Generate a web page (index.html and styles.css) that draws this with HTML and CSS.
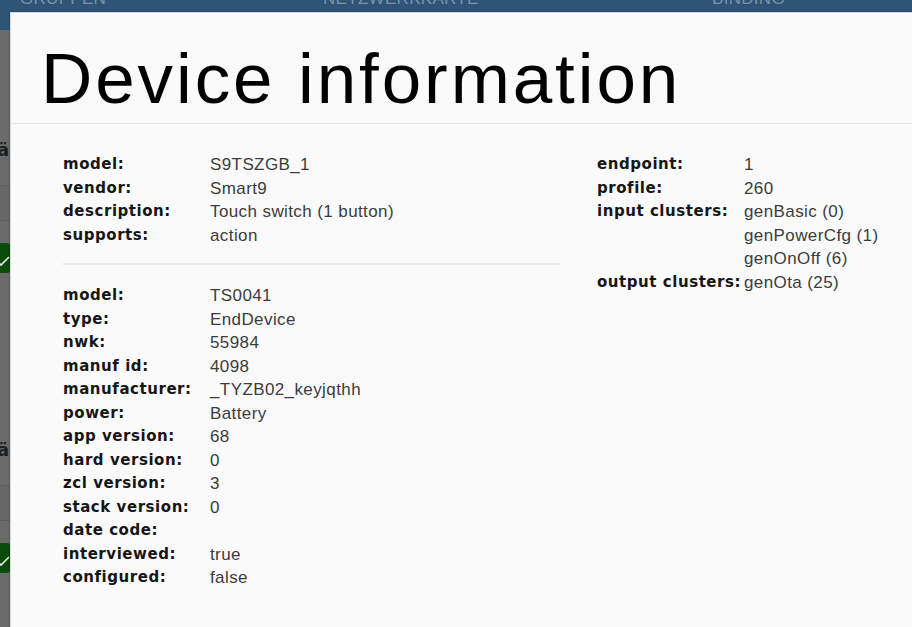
FILE: index.html
```html
<!DOCTYPE html>
<html lang="en">
<head>
<meta charset="utf-8">
<title>Device information</title>
<link rel="stylesheet" href="styles.css">
</head>
<body>
<div class="page">
  <header class="topbar">
    <nav class="nav">
      <span class="nav-item nav-first">Gruppen</span>
      <span class="nav-item nav-second">Netzwerkkarte</span>
      <span class="nav-item">Binding</span>
    </nav>
  </header>
  <main class="list">
    <div class="group group-first">
      <div class="g-text">ä</div>
      <div class="g-mid"></div>
      <div class="g-check"><svg viewBox="0 0 10 30" width="10" height="30"><path d="M-2 19 L1 22 L9 14" fill="none" stroke="#e8f0e8" stroke-width="1.6"/></svg></div>
    </div>
    <div class="group group-next">
      <div class="g-text">ä</div>
      <div class="g-mid"></div>
      <div class="g-check"><svg viewBox="0 0 10 30" width="10" height="30"><path d="M-2 19 L1 22 L9 14" fill="none" stroke="#e8f0e8" stroke-width="1.6"/></svg></div>
    </div>
  </main>
</div>

<div class="modal">
  <div class="modal-header">
    <h1 class="modal-title">Device information</h1>
  </div>
  <div class="modal-body">
    <section class="col-left">
      <dl class="info">
        <dt>model:</dt><dd>S9TSZGB_1</dd>
        <dt>vendor:</dt><dd>Smart9</dd>
        <dt>description:</dt><dd>Touch switch (1 button)</dd>
        <dt>supports:</dt><dd>action</dd>
      </dl>
      <div class="divider"></div>
      <dl class="info">
        <dt>model:</dt><dd>TS0041</dd>
        <dt>type:</dt><dd>EndDevice</dd>
        <dt>nwk:</dt><dd>55984</dd>
        <dt>manuf id:</dt><dd>4098</dd>
        <dt>manufacturer:</dt><dd>_TYZB02_keyjqthh</dd>
        <dt>power:</dt><dd>Battery</dd>
        <dt>app version:</dt><dd>68</dd>
        <dt>hard version:</dt><dd>0</dd>
        <dt>zcl version:</dt><dd>3</dd>
        <dt>stack version:</dt><dd>0</dd>
        <dt>date code:</dt><dd></dd>
        <dt>interviewed:</dt><dd>true</dd>
        <dt>configured:</dt><dd>false</dd>
      </dl>
    </section>
    <section class="col-right">
      <dl class="info">
        <dt>endpoint:</dt><dd>1</dd>
        <dt>profile:</dt><dd>260</dd>
        <dt>input clusters:</dt><dd>genBasic (0)<br>genPowerCfg (1)<br>genOnOff (6)</dd>
        <dt>output clusters:</dt><dd>genOta (25)</dd>
      </dl>
    </section>
  </div>
</div>
</body>
</html>
```

FILE: styles.css
```css
html, body {
  margin: 0;
  padding: 0;
  height: 100%;
  overflow: hidden;
}

body {
  background: #6b6b6b;
  font-family: "Liberation Sans", Arial, sans-serif;
}

.page {
  height: 100%;
}

.topbar {
  height: 30px;
  background: #2e5577;
  overflow: hidden;
}

.nav {
  display: flex;
  margin-top: -11px;
  padding-left: 20px;
  line-height: 20px;
  font-size: 17px;
  letter-spacing: 0.3px;
  text-transform: uppercase;
  color: #7b92aa;
}

.nav-first {
  width: 303px;
}

.nav-second {
  width: 389px;
}

.list {
  display: flex;
  flex-direction: column;
}

.group-first {
  margin-top: 105px;
}

.group-next {
  margin-top: 162px;
}

.g-text {
  height: 45px;
  margin-left: -3px;
  font-family: "DejaVu Sans", sans-serif;
  font-weight: bold;
  font-size: 18px;
  line-height: 30px;
  color: #1e1e1e;
}

.g-mid {
  margin-top: 5px;
  height: 34px;
  border-top: 1px solid #5d5d5d;
  border-bottom: 1px solid #5d5d5d;
  background: #676767;
}

.g-check {
  margin-top: 22px;
  width: 10px;
  height: 30px;
  background: #0b4a0d;
  border-radius: 0 3px 3px 0;
}

.g-check svg {
  display: block;
}

.modal {
  position: absolute;
  left: 10px;
  top: 12px;
  right: -10px;
  bottom: -10px;
  background: #fafafa;
  border: 1px solid #d4dbe1;
  box-shadow: 0 0 3px rgba(0, 0, 0, 0.25);
}

.modal-header {
  padding: 26px 0 4px 30px;
  border-bottom: 1px solid #e3e3e3;
}

.modal-title {
  margin: 0;
  font-family: "Liberation Sans", Arial, sans-serif;
  font-weight: normal;
  font-size: 71px;
  line-height: 80px;
  letter-spacing: 2.9px;
  color: #000;
}

.modal-body {
  display: flex;
  padding: 29px 0 0 52px;
}

.col-left {
  width: 497px;
}

.col-right {
  margin-left: 37px;
}

.info {
  display: grid;
  grid-template-columns: 147px auto;
  align-items: start;
  margin: 0;
  line-height: 23.5px;
}

.info dt {
  height: 23.5px;
  font-family: "DejaVu Sans", Verdana, sans-serif;
  font-weight: bold;
  font-size: 15px;
  letter-spacing: 0.55px;
  color: #161616;
}

.info dd {
  margin: 0;
  min-height: 23.5px;
  font-family: "Liberation Sans", Arial, sans-serif;
  font-size: 17px;
  letter-spacing: 0.4px;
  color: #3c3c3c;
}

.divider {
  height: 2px;
  margin: 16px 0 19px;
  background: #e9e9e9;
}
```
